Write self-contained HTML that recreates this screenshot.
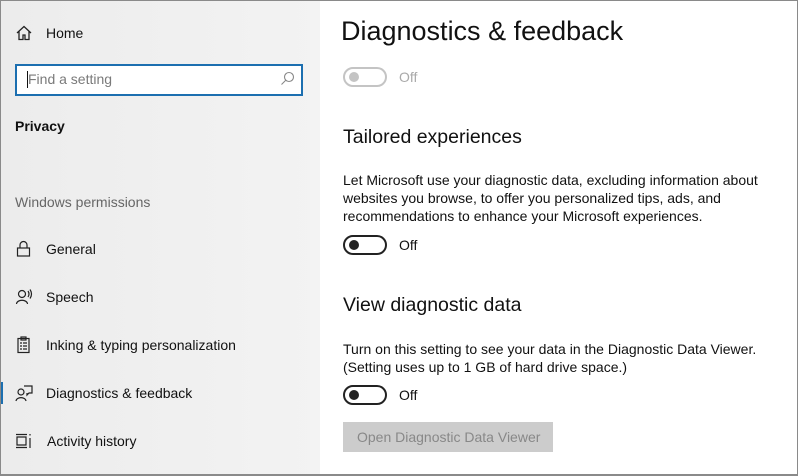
<!DOCTYPE html>
<html><head><style>
body{margin:0;width:798px;height:476px;overflow:hidden;font-family:"Liberation Sans",sans-serif;position:relative;background:#fff}
.frame{position:absolute;inset:0;border:1px solid #8a8a8a;border-bottom:2px solid #8a8a8a;box-sizing:border-box;pointer-events:none;z-index:9}
.left{position:absolute;left:0;top:0;width:320px;height:476px;background:linear-gradient(90deg,#ececec,#f3f3f3)}
.t{position:absolute;white-space:nowrap;color:#111}
.ic{position:absolute;left:15px;width:18px;height:18px}
.item{font-size:14px}
.tog{position:absolute;left:343px;width:44px;height:20px;border:2px solid #222;border-radius:11px;box-sizing:border-box}
.tog::after{content:"";position:absolute;left:4px;top:3px;width:10px;height:10px;border-radius:50%;background:#222}
.tog.dis{border-color:#c4c4c4}.tog.dis::after{background:#c4c4c4}
p{margin:0}
</style></head><body>
<div class="left"></div>
<svg class="ic" style="top:24px" viewBox="0 0 18 18" fill="none" stroke="#222" stroke-width="1.3"><path d="M2 9 L9 2.5 L16 9 M4 7.5 V15.5 H8 V11 H10 V15.5 H14 V7.5"/></svg>
<div class="t item" style="left:46px;top:25px">Home</div>
<div style="position:absolute;left:15px;top:64px;width:288px;height:32px;border:2px solid #1c6fb0;box-sizing:border-box;background:#fff"></div>
<div style="position:absolute;left:27px;top:71px;width:1px;height:17px;background:#111"></div>
<div class="t" style="left:28px;top:71px;font-size:14px;color:#7a7a7a">Find a setting</div>
<svg style="position:absolute;left:280px;top:71px" width="15" height="15" viewBox="0 0 15 15" fill="none" stroke="#888" stroke-width="1.1"><circle cx="9" cy="6" r="4.5"/><path d="M6 9 L1.5 13.5"/></svg>
<div class="t" style="left:15px;top:118px;font-size:14px;font-weight:bold">Privacy</div>
<div class="t" style="left:15px;top:194px;font-size:14px;color:#666">Windows permissions</div>
<svg class="ic" style="top:240px" viewBox="0 0 18 18" fill="none" stroke="#222" stroke-width="1.2"><rect x="2.5" y="8" width="12" height="8"/><path d="M5 8 V5 A3.5 3.5 0 0 1 12 5 V8"/></svg>
<div class="t item" style="left:46px;top:241px">General</div>
<svg class="ic" style="top:288px" viewBox="0 0 18 18" fill="none" stroke="#222" stroke-width="1.2"><circle cx="7" cy="6" r="3.5"/><path d="M1.5 16 C2 11 12 11 12.5 16 M13 3 Q15 6 13 9 M15 1.5 Q18 6 15 10.5"/></svg>
<div class="t item" style="left:46px;top:289px">Speech</div>
<svg class="ic" style="top:336px" viewBox="0 0 18 18" fill="none" stroke="#222" stroke-width="1.2"><rect x="3" y="2.5" width="11" height="14"/><rect x="6" y="1" width="5" height="3"/><path d="M5 7h2M8 7h4M5 10h2M8 10h4M5 13h2M8 13h4"/></svg>
<div class="t item" style="left:46px;top:337px">Inking &amp; typing personalization</div>
<div style="position:absolute;left:0;top:382px;width:3px;height:22px;background:#1c6fb0"></div>
<svg class="ic" style="top:384px" viewBox="0 0 18 18" fill="none" stroke="#222" stroke-width="1.2"><circle cx="6" cy="8" r="3"/><path d="M1 17 C1.5 12.5 10.5 12.5 11 17 M9 2 H17 V9 H14 L12 11 V9"/></svg>
<div class="t item" style="left:46px;top:385px">Diagnostics &amp; feedback</div>
<svg class="ic" style="top:432px" viewBox="0 0 18 18" fill="none" stroke="#222" stroke-width="1.2"><path d="M1 2.5 H12 M1 15.5 H12 M2 5 H11 V13 H2 Z M15 2 V3.5 M15 6 V16"/></svg>
<div class="t item" style="left:47px;top:433px">Activity history</div>

<div class="t" style="left:341px;top:16px;font-size:27px;color:#111">Diagnostics &amp; feedback</div>
<div class="tog dis" style="top:67px"></div>
<div class="t" style="left:399px;top:69px;font-size:14px;color:#aaa">Off</div>
<div class="t" style="left:343px;top:126px;font-size:19.5px">Tailored experiences</div>
<div class="t" style="left:343px;top:171px;font-size:14px;line-height:18px">Let Microsoft use your diagnostic data, excluding information about<br>websites you browse, to offer you personalized tips, ads, and<br>recommendations to enhance your Microsoft experiences.</div>
<div class="tog" style="top:235px"></div>
<div class="t" style="left:399px;top:237px;font-size:14px">Off</div>
<div class="t" style="left:343px;top:294px;font-size:19.5px">View diagnostic data</div>
<div class="t" style="left:343px;top:340px;font-size:14px;line-height:18px">Turn on this setting to see your data in the Diagnostic Data Viewer.<br>(Setting uses up to 1 GB of hard drive space.)</div>
<div class="tog" style="top:385px"></div>
<div class="t" style="left:399px;top:387px;font-size:14px">Off</div>
<div style="position:absolute;left:343px;top:422px;width:210px;height:30px;background:#cccccc"></div>
<div class="t" style="left:357px;top:429px;font-size:14px;color:#888">Open Diagnostic Data Viewer</div>
<div class="frame"></div>
</body></html>
